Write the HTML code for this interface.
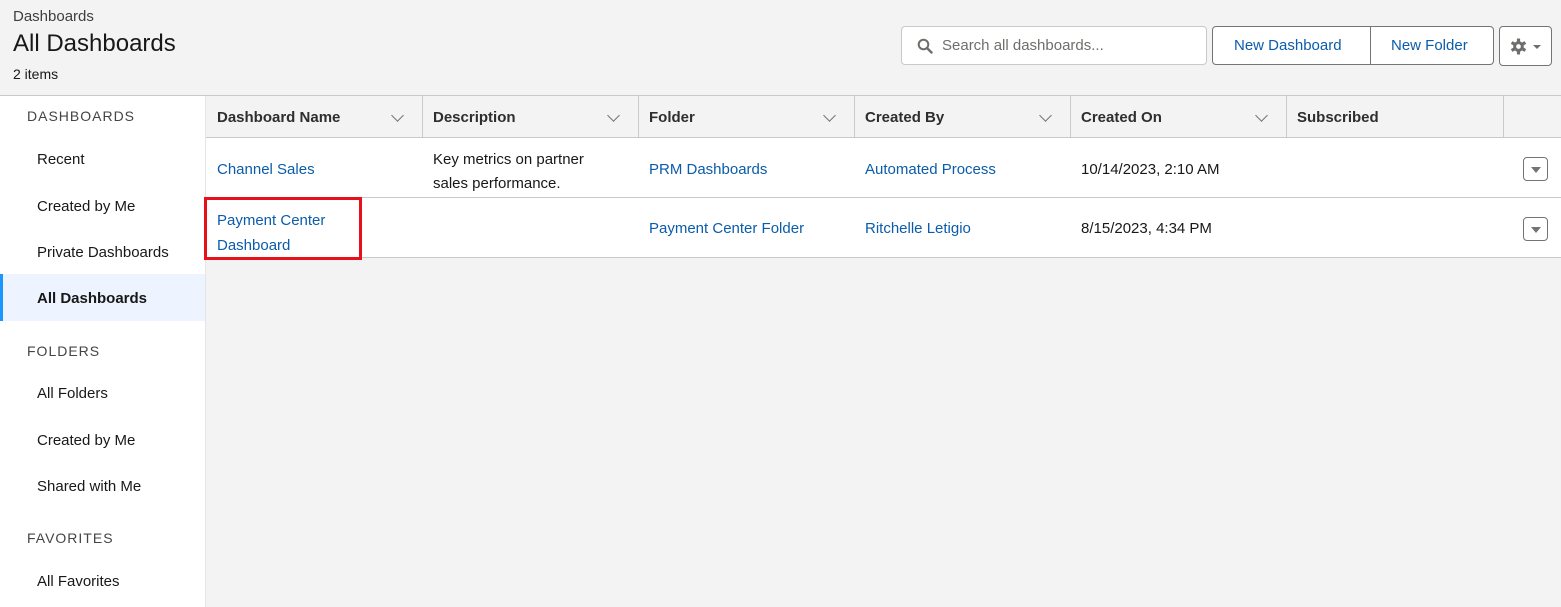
<!DOCTYPE html>
<html><head><style>
*{margin:0;padding:0;box-sizing:border-box}
body{width:1561px;height:607px;overflow:hidden;background:#f3f3f3;font-family:"Liberation Sans",sans-serif;color:#181818;position:relative;font-size:15px}
.a{position:absolute;white-space:nowrap}
.lk{color:#0b5cab}
.hd{font-weight:bold;color:#2e2e2e}
.sec{color:#444;letter-spacing:1px;font-size:14px}
.chev{position:absolute;width:9px;height:9px;border-right:1.5px solid #747474;border-bottom:1.5px solid #747474;transform:rotate(45deg)}
.vl{position:absolute;top:96px;height:41px;width:1px;background:#c9c9c9}
.dd{position:absolute;width:25px;height:24px;border:1px solid #747474;border-radius:4px;background:#fff}
.dd:after{content:"";position:absolute;left:7px;top:9px;border-left:5px solid transparent;border-right:5px solid transparent;border-top:6px solid #747474}
</style></head><body>
<div class="a" style="left:13px;top:8px;font-size:15px;color:#3e3e3c">Dashboards</div>
<div class="a" style="left:13px;top:30px;font-size:24px;color:#181818">All Dashboards</div>
<div class="a" style="left:13px;top:66px;font-size:14px">2 items</div>

<div class="a" style="left:901px;top:26px;width:306px;height:39px;background:#fff;border:1px solid #c9c9c9;border-radius:4px"></div>
<svg class="a" style="left:917px;top:38px" width="16" height="16" viewBox="0 0 16 16"><circle cx="6.5" cy="6.5" r="4.8" fill="none" stroke="#706e6b" stroke-width="2"/><path d="M10 10L14.5 14.5" stroke="#706e6b" stroke-width="2.4" stroke-linecap="round"/></svg>
<div class="a" style="left:942px;top:37px;color:#706e6b">Search all dashboards...</div>

<div class="a" style="left:1212px;top:26px;width:282px;height:39px;background:#fff;border:1px solid #747474;border-radius:4px"></div>
<div class="a" style="left:1370px;top:26px;width:1px;height:39px;background:#747474"></div>
<div class="a lk" style="left:1234px;top:37px">New Dashboard</div>
<div class="a lk" style="left:1391px;top:37px">New Folder</div>
<div class="a" style="left:1499px;top:26px;width:53px;height:40px;background:#fff;border:1px solid #747474;border-radius:4px"></div>
<svg class="a" style="left:1510px;top:38px" width="17" height="17" viewBox="0 0 16 16"><g fill="#706e6b"><circle cx="8" cy="8" r="5"/><rect x="6.5" y="0.5" width="3" height="15" rx="0.5"/><rect x="6.5" y="0.5" width="3" height="15" rx="0.5" transform="rotate(60 8 8)"/><rect x="6.5" y="0.5" width="3" height="15" rx="0.5" transform="rotate(120 8 8)"/></g><circle cx="8" cy="8" r="2.2" fill="#fff"/></svg>
<div class="a" style="left:1533px;top:45px;border-left:4px solid transparent;border-right:4px solid transparent;border-top:4px solid #706e6b"></div>

<div class="a" style="left:0;top:95px;width:1561px;height:1px;background:#c9c9c9"></div>
<div class="a" style="left:0;top:96px;width:205px;height:511px;background:#fff"></div>
<div class="a" style="left:205px;top:96px;width:1px;height:511px;background:#e5e5e5"></div>
<div class="a sec" style="left:27px;top:108px">DASHBOARDS</div>
<div class="a" style="left:37px;top:151px">Recent</div>
<div class="a" style="left:37px;top:198px">Created by Me</div>
<div class="a" style="left:37px;top:244px">Private Dashboards</div>
<div class="a" style="left:0;top:274px;width:205px;height:47px;background:#eef4ff"></div>
<div class="a" style="left:0;top:274px;width:3px;height:47px;background:#1b96ff"></div>
<div class="a" style="left:37px;top:290px;font-weight:bold">All Dashboards</div>
<div class="a sec" style="left:27px;top:343px">FOLDERS</div>
<div class="a" style="left:37px;top:385px">All Folders</div>
<div class="a" style="left:37px;top:432px">Created by Me</div>
<div class="a" style="left:37px;top:478px">Shared with Me</div>
<div class="a sec" style="left:27px;top:530px">FAVORITES</div>
<div class="a" style="left:37px;top:573px">All Favorites</div>

<div class="a" style="left:206px;top:137px;width:1355px;height:1px;background:#c9c9c9"></div>
<div class="a" style="left:206px;top:138px;width:1355px;height:119px;background:#fff"></div>
<div class="a" style="left:206px;top:197px;width:1355px;height:1px;background:#c9c9c9"></div>
<div class="a" style="left:206px;top:257px;width:1355px;height:1px;background:#c9c9c9"></div>

<div class="vl" style="left:422px"></div><div class="vl" style="left:638px"></div><div class="vl" style="left:854px"></div><div class="vl" style="left:1070px"></div><div class="vl" style="left:1286px"></div><div class="vl" style="left:1503px"></div>
<div class="a hd" style="left:217px;top:109px">Dashboard Name</div>
<div class="a hd" style="left:433px;top:109px">Description</div>
<div class="a hd" style="left:649px;top:109px">Folder</div>
<div class="a hd" style="left:865px;top:109px">Created By</div>
<div class="a hd" style="left:1081px;top:109px">Created On</div>
<div class="a hd" style="left:1297px;top:109px">Subscribed</div>
<div class="chev" style="left:393px;top:111px"></div>
<div class="chev" style="left:609px;top:111px"></div>
<div class="chev" style="left:825px;top:111px"></div>
<div class="chev" style="left:1041px;top:111px"></div>
<div class="chev" style="left:1257px;top:111px"></div>

<div class="a lk" style="left:217px;top:161px">Channel Sales</div>
<div class="a" style="left:433px;top:148px;line-height:24px">Key metrics on partner<br>sales performance.</div>
<div class="a lk" style="left:649px;top:161px">PRM Dashboards</div>
<div class="a lk" style="left:865px;top:161px">Automated Process</div>
<div class="a" style="left:1081px;top:161px">10/14/2023, 2:10 AM</div>
<div class="dd" style="left:1523px;top:157px"></div>

<div class="a lk" style="left:217px;top:208px;line-height:25px">Payment Center<br>Dashboard</div>
<div class="a" style="left:204px;top:197px;width:158px;height:63px;border:3px solid #e8101b"></div>
<div class="a lk" style="left:649px;top:220px">Payment Center Folder</div>
<div class="a lk" style="left:865px;top:220px">Ritchelle Letigio</div>
<div class="a" style="left:1081px;top:220px">8/15/2023, 4:34 PM</div>
<div class="dd" style="left:1523px;top:217px"></div>
</body></html>
